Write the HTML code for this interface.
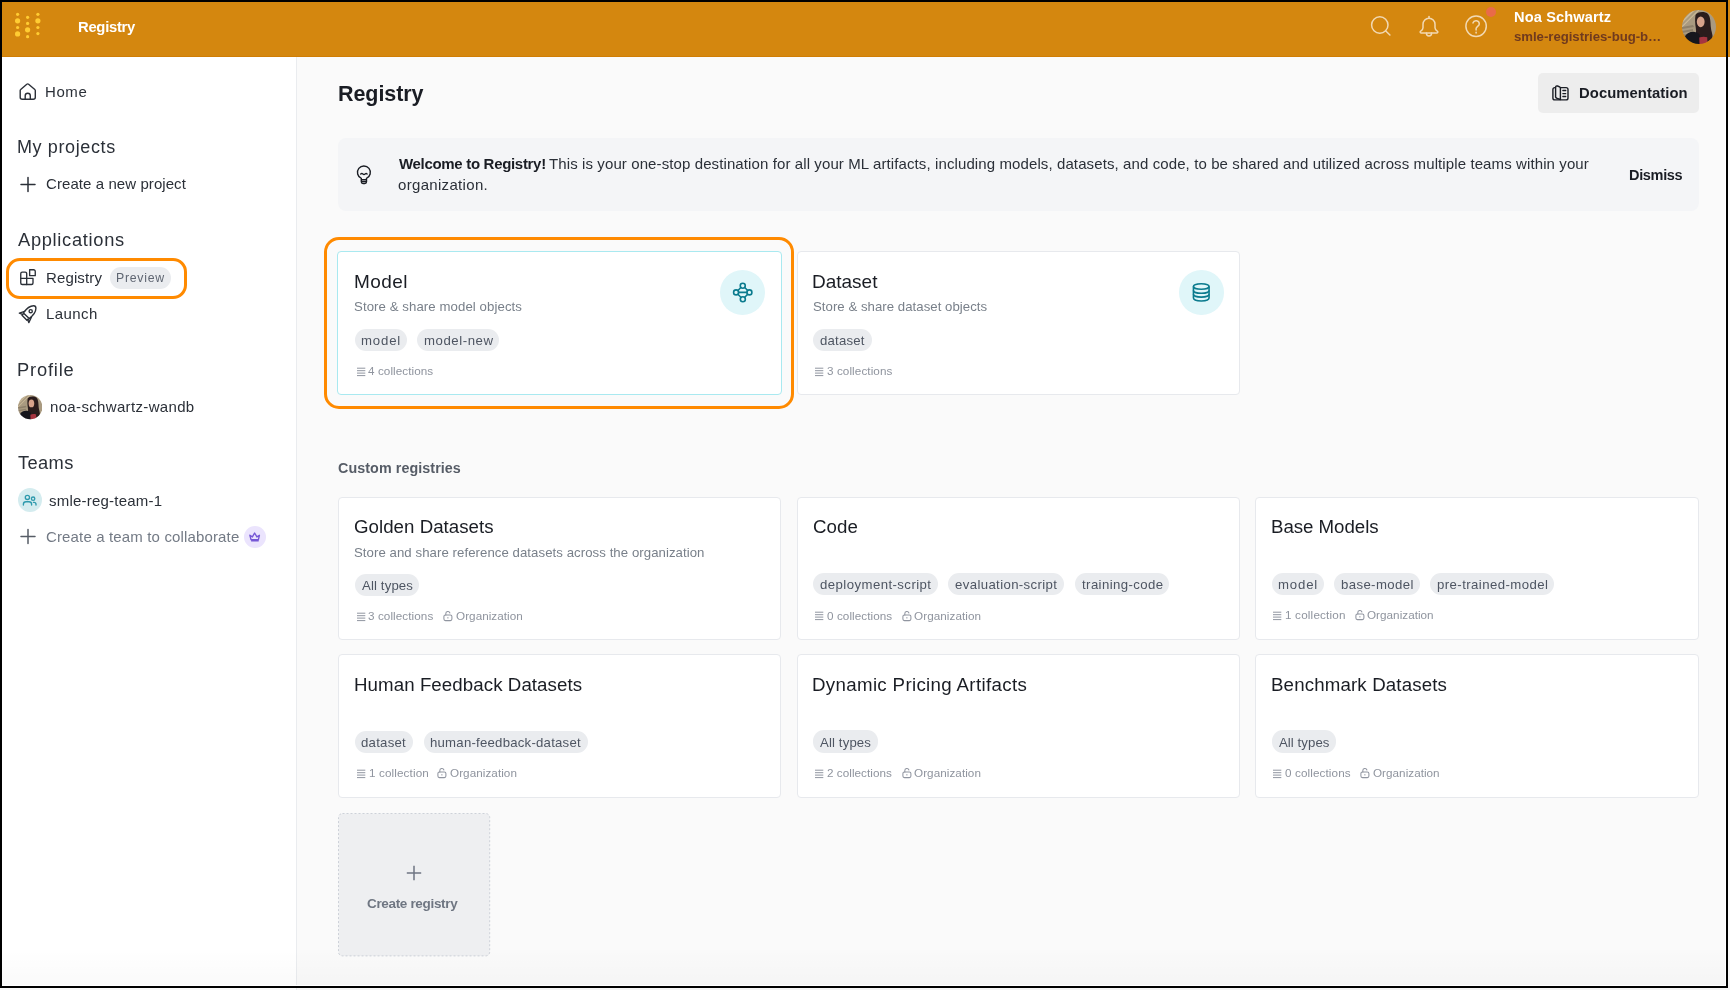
<!DOCTYPE html><html><head><meta charset="utf-8"><style>
html,body{margin:0;padding:0;width:1730px;height:990px;overflow:hidden;background:#FAFAFA;}
body{position:relative;font-family:"Liberation Sans",sans-serif;}
.t{position:absolute;white-space:nowrap;will-change:transform;}
</style></head><body>
<div style="position:absolute;left:0;top:0;width:1730px;height:57px;background:#D4870F;"></div>
<div style="position:absolute;left:0;top:55.6px;width:1730px;height:1.4px;background:#D07D04;"></div>
<svg width="60" height="56" style="position:absolute;left:0;top:0"><circle cx="17.6" cy="14.3" r="1.6" fill="#FFCC33"/><circle cx="17.6" cy="20.8" r="2.6" fill="#FFCC33"/><circle cx="17.6" cy="27.5" r="1.6" fill="#FFCC33"/><circle cx="17.6" cy="33.9" r="2.6" fill="#FFCC33"/><circle cx="27.6" cy="17.3" r="1.6" fill="#FFCC33"/><circle cx="27.6" cy="23.4" r="1.6" fill="#FFCC33"/><circle cx="27.6" cy="29.8" r="2.6" fill="#FFCC33"/><circle cx="27.6" cy="36.7" r="1.6" fill="#FFCC33"/><circle cx="37.9" cy="14.3" r="1.6" fill="#FFCC33"/><circle cx="37.9" cy="20.8" r="2.6" fill="#FFCC33"/><circle cx="37.9" cy="27.5" r="1.6" fill="#FFCC33"/><circle cx="37.9" cy="33.6" r="1.6" fill="#FFCC33"/></svg>
<div class="t" style="left:78.40px;top:20.00px;font-size:14.8px;line-height:14.8px;color:#FFFFFF;font-weight:700;letter-spacing:-0.276px;">Registry</div>
<svg width="200" height="56" style="position:absolute;left:1360px;top:0" fill="none" stroke="#F2D9B3" stroke-width="1.5" stroke-linecap="round" stroke-linejoin="round">
<circle cx="19.8" cy="25" r="8.2"/><path d="M25.8 31l4.1 4"/>
<path d="M69 18.2a6 6 0 0 0-6 6v3.6c0 1.8-1.2 2.8-2.5 3.6a.9.9 0 0 0 .5 1.6h16a.9.9 0 0 0 .5-1.6c-1.3-.8-2.5-1.8-2.5-3.6v-3.6a6 6 0 0 0-6-6z"/><path d="M66.4 33.1a2.6 3 0 0 0 5.2 0"/><path d="M69 16.4v1.8"/>
<circle cx="116.1" cy="26.2" r="10.2"/><path d="M112.9 22.9a3.3 3.3 0 0 1 6.4 1.1c0 2.2-3.2 2.6-3.2 4.6v1.3"/><path d="M116.1 32.3v0.6"/>
</svg>
<div style="position:absolute;left:1485.7px;top:7.3px;width:10px;height:10px;border-radius:50%;background:#E96B49;"></div>
<div class="t" style="left:1514.43px;top:10.00px;font-size:14.6px;line-height:14.6px;color:#FFFFFF;font-weight:700;letter-spacing:0.128px;">Noa Schwartz</div>
<div class="t" style="left:1514.47px;top:30.00px;font-size:13.2px;line-height:13.2px;color:#703A1E;font-weight:700;letter-spacing:-0.034px;">smle-registries-bug-b…</div>
<svg width="34" height="34" style="position:absolute;left:1682px;top:9.5px" viewBox="0 0 34 34">
<defs><clipPath id="ac"><circle cx="17" cy="17" r="17"/></clipPath><filter id="acf"><feGaussianBlur stdDeviation="0.45"/></filter></defs>
<g clip-path="url(#ac)"><g filter="url(#acf)"><rect width="34" height="34" fill="#A99A80"/>
<path d="M-2 8 L8 -2 L10 -2 L-2 10Z M-2 13 L13 -2 L15 -2 L-2 15Z M-2 18 L18 -2 L19.5 -2 L-2 19.5Z M24 -2 L34 8 L34 10 L22 -2Z" fill="#CDBB98"/>
<path d="M0 17 L11 15 L12 17 L0 19Z M0 21 L11 19 L11 21 L0 23Z M0 25 L9 23 L9 25 L0 27Z" fill="#8E806A"/>
<path d="M13.5 5C15 1.5 23 1 26 4c2.5 3 2.5 8 2.8 13 .3 4 2.2 7.5 1.7 11.5L24 33l-10-5c-.5-3 .5-6-.2-10-.7-4-1-9-.3-13z" fill="#2A1D1B"/>
<ellipse cx="18.7" cy="11.8" rx="3.9" ry="5.4" fill="#D7A38B"/>
<path d="M1 34c0-5 2-9 5.5-11 3.5-2 8-1.5 11 1.5L18.5 34z" fill="#12131B"/>
<path d="M17.2 27.5c2.5-1 5.5-1.2 8-.3l.3 6.8H17.5z" fill="#A63440"/>
</g></g></svg>
<div style="position:absolute;left:0;top:57px;width:296px;height:933px;background:#FFFFFF;"></div>
<div style="position:absolute;left:296px;top:57px;width:1px;height:933px;background:#EAECEF;"></div>
<svg width="28" height="28" style="position:absolute;left:14px;top:78px" fill="none" stroke="#2B3038" stroke-width="1.4" stroke-linecap="round" stroke-linejoin="round">
<path d="M6.2 19.3V12.5q0-.6.5-1L12.8 6.2q.9-.7 1.8 0L20.8 11.5q.5.4.5 1V19.3q0 2-2 2H8.2q-2 0-2-2Z"/><path d="M11.2 21.3V17.8a2.55 2.55 0 0 1 5.1 0V21.3"/></svg>
<div class="t" style="left:45.45px;top:84.00px;font-size:15px;line-height:15px;color:#2B3038;letter-spacing:0.593px;">Home</div>
<div class="t" style="left:16.91px;top:138.00px;font-size:18px;line-height:18px;color:#2B3038;letter-spacing:0.612px;">My projects</div>
<svg width="18" height="18" style="position:absolute;left:19px;top:176px" fill="none" stroke="#2B3038" stroke-width="1.5" stroke-linecap="round" stroke-linejoin="round"><path d="M9 1.5v14M2 8.5h14"/></svg>
<div class="t" style="left:45.89px;top:176.00px;font-size:15px;line-height:15px;color:#2B3038;letter-spacing:0.077px;">Create a new project</div>
<div class="t" style="left:17.65px;top:231.00px;font-size:18.3px;line-height:18.3px;color:#2B3038;letter-spacing:0.686px;">Applications</div>
<div style="position:absolute;left:5.5px;top:258.2px;width:175.4px;height:34.6px;border:3.5px solid #FF8A00;border-radius:14px;"></div>
<svg width="28" height="28" style="position:absolute;left:14px;top:264px" fill="none" stroke="#2B3038" stroke-width="1.35" stroke-linecap="round" stroke-linejoin="round">
<path d="M6.75 14.4V9.65a1.5 1.5 0 0 1 1.5-1.5H11.2a1.5 1.5 0 0 1 1.5 1.5V20.45"/><path d="M6.75 14.4H19V18.95a1.5 1.5 0 0 1-1.5 1.5H8.25a1.5 1.5 0 0 1-1.5-1.5Z"/><path d="M15.65 5.75H19.6a1.65 1.65 0 0 1 1.65 1.65V11.65H15.65Z"/></svg>
<div class="t" style="left:45.55px;top:270.00px;font-size:15px;line-height:15px;color:#2B3038;letter-spacing:0.128px;">Registry</div>
<div style="position:absolute;left:109.6px;top:267.2px;width:61.7px;height:21.6px;border-radius:11px;background:#EAECEF;"></div>
<div class="t" style="left:116.28px;top:272.00px;font-size:12.3px;line-height:12.3px;color:#5F6672;letter-spacing:0.734px;">Preview</div>
<svg width="28" height="28" style="position:absolute;left:14px;top:300px" fill="none" stroke="#2B3038" stroke-width="1.4" stroke-linecap="round" stroke-linejoin="round">
<path d="M9.4 12.9C12.5 8.6 16.2 5.8 19.6 5.8 21 5.8 21.9 6.8 21.9 8.3 21.9 11.7 19.2 15.5 15.2 18.6Z"/><path d="M10.6 11.3L5.4 13.2 8.9 14.6"/><path d="M17.5 16.9L14.8 22.6 13.6 19.3"/><path d="M8.9 14.1L8 15.3 12.9 20.2 14.3 19.3"/><circle cx="16.7" cy="11.2" r="1.6"/></svg>
<div class="t" style="left:45.55px;top:306.00px;font-size:15px;line-height:15px;color:#2B3038;letter-spacing:0.406px;">Launch</div>
<div class="t" style="left:16.99px;top:361.00px;font-size:18.3px;line-height:18.3px;color:#2B3038;letter-spacing:0.828px;">Profile</div>
<svg width="24.4" height="24.4" style="position:absolute;left:17.5px;top:395.2px" viewBox="0 0 34 34">
<defs><clipPath id="ac2"><circle cx="17" cy="17" r="17"/></clipPath><filter id="ac2f"><feGaussianBlur stdDeviation="0.45"/></filter></defs>
<g clip-path="url(#ac2)"><g filter="url(#ac2f)"><rect width="34" height="34" fill="#A99A80"/>
<path d="M-2 8 L8 -2 L10 -2 L-2 10Z M-2 13 L13 -2 L15 -2 L-2 15Z M-2 18 L18 -2 L19.5 -2 L-2 19.5Z M24 -2 L34 8 L34 10 L22 -2Z" fill="#CDBB98"/>
<path d="M0 17 L11 15 L12 17 L0 19Z M0 21 L11 19 L11 21 L0 23Z M0 25 L9 23 L9 25 L0 27Z" fill="#8E806A"/>
<path d="M13.5 5C15 1.5 23 1 26 4c2.5 3 2.5 8 2.8 13 .3 4 2.2 7.5 1.7 11.5L24 33l-10-5c-.5-3 .5-6-.2-10-.7-4-1-9-.3-13z" fill="#2A1D1B"/>
<ellipse cx="18.7" cy="11.8" rx="3.9" ry="5.4" fill="#D7A38B"/>
<path d="M1 34c0-5 2-9 5.5-11 3.5-2 8-1.5 11 1.5L18.5 34z" fill="#12131B"/>
<path d="M17.2 27.5c2.5-1 5.5-1.2 8-.3l.3 6.8H17.5z" fill="#A63440"/>
</g></g></svg>
<div class="t" style="left:49.85px;top:399.00px;font-size:15px;line-height:15px;color:#2B3038;letter-spacing:0.341px;">noa-schwartz-wandb</div>
<div class="t" style="left:17.78px;top:454.00px;font-size:18.3px;line-height:18.3px;color:#2B3038;letter-spacing:0.363px;">Teams</div>
<div style="position:absolute;left:17.9px;top:488px;width:24px;height:24px;border-radius:50%;background:#D4ECEF;"></div>
<svg width="32" height="32" style="position:absolute;left:14px;top:484px" fill="none" stroke="#2E9AAD" stroke-width="1.35" stroke-linecap="round" stroke-linejoin="round"><circle cx="13.4" cy="13.4" r="2.1"/><circle cx="19.1" cy="14.7" r="1.7"/><path d="M9.4 21V20.3a2.6 2.6 0 0 1 2.6-2.6H15a2.6 2.6 0 0 1 2.6 2.6V21"/><path d="M19.4 18.3h.6a2 2 0 0 1 2 2V21"/></svg>
<div class="t" style="left:49.38px;top:493.00px;font-size:15px;line-height:15px;color:#2B3038;letter-spacing:0.218px;">smle-reg-team-1</div>
<svg width="18" height="18" style="position:absolute;left:19px;top:528px" fill="none" stroke="#565C66" stroke-width="1.5" stroke-linecap="round"><path d="M9 1.5v14M2 8.5h14"/></svg>
<div class="t" style="left:45.59px;top:529.00px;font-size:15px;line-height:15px;color:#737A85;letter-spacing:0.148px;">Create a team to collaborate</div>
<div style="position:absolute;left:244px;top:526.2px;width:22px;height:22px;border-radius:50%;background:#EBE4FD;"></div>
<svg width="32" height="32" style="position:absolute;left:238px;top:521px"><path d="M11.9 14.3L14.4 15.9 16.6 12 18.9 15.9 21.4 14.3 20.4 18.6H13Z" fill="none" stroke="#7657D6" stroke-width="1.4" stroke-linejoin="round"/><rect x="13.1" y="18.2" width="7.6" height="2.3" fill="#7657D6"/></svg>
<div style="position:absolute;left:297px;top:57px;width:1433px;height:933px;background:#FAFAFA;"></div>
<div class="t" style="left:337.95px;top:84.00px;font-size:21.5px;line-height:21.5px;color:#1A1D24;font-weight:700;letter-spacing:-0.071px;">Registry</div>
<div style="position:absolute;left:1538.3px;top:73.1px;width:160.5px;height:40.3px;border-radius:5px;background:#EDEDED;"></div>
<svg width="28" height="28" style="position:absolute;left:1546px;top:79px" fill="none" stroke="#1A1D24" stroke-width="1.4" stroke-linejoin="round" stroke-linecap="round">
<path d="M9.5 8.6H8.9a2 2 0 0 0-2 2V18.9a2 2 0 0 0 2 2H20a2 2 0 0 0 2-2V10.6a2 2 0 0 0-2-2H14.4"/><path d="M9.6 18V8.3a1.4 1.4 0 0 1 1.9-1.3L13.6 7.9a1.4 1.4 0 0 1 .8 1.3V20.5L11.1 19.4a2.2 2.2 0 0 1-1.5-1.4Z"/><path d="M16.9 11.5h2.8M16.9 14.6h2.8M16.9 17.5h2.8"/></svg>
<div class="t" style="left:1578.50px;top:86.00px;font-size:14.8px;line-height:14.8px;color:#1A1D24;font-weight:700;letter-spacing:0.079px;">Documentation</div>
<div style="position:absolute;left:337.7px;top:138px;width:1361px;height:72.5px;border-radius:8px;background:#F4F5F7;"></div>
<svg width="28" height="28" style="position:absolute;left:350px;top:160px" fill="none" stroke="#1A1D24" stroke-width="1.4" stroke-linecap="round" stroke-linejoin="round">
<path d="M11.3 18.3A6.45 6.45 0 1 1 16.5 18.3V21.8a1.7 1.7 0 0 1-1.7 1.7h-1.8a1.7 1.7 0 0 1-1.7-1.7Z"/><path d="M11.6 19.8h4.6M11.8 21.6h4.2"/><path d="M10.7 14q1.1-.9 2.2 0t2.2 0 2 0"/></svg>
<div class="t" style="left:398.83px;top:156.00px;font-size:15px;line-height:15px;color:#1A1D24;font-weight:700;letter-spacing:-0.314px;">Welcome to Registry!</div>
<div class="t" style="left:548.54px;top:156.00px;font-size:15px;line-height:15px;color:#2B3038;letter-spacing:0.105px;">This is your one-stop destination for all your ML artifacts, including models, datasets, and code, to be shared and utilized across multiple teams within your</div>
<div class="t" style="left:398.31px;top:177.00px;font-size:15px;line-height:15px;color:#2B3038;letter-spacing:0.321px;">organization.</div>
<div class="t" style="left:1629.33px;top:168.00px;font-size:14.5px;line-height:14.5px;color:#1A1D24;font-weight:700;letter-spacing:-0.324px;">Dismiss</div>
<div style="position:absolute;left:323.5px;top:237px;width:470.5px;height:172px;box-sizing:border-box;border:3.4px solid #FF8A00;border-radius:15px;"></div>
<div style="position:absolute;left:337.1px;top:251.0px;width:444.5px;height:143.6px;box-sizing:border-box;border:1px solid #A9E9F0;border-radius:4px;background:#FFFFFF;"></div>
<div style="position:absolute;left:796.6px;top:251.0px;width:443.6px;height:143.6px;box-sizing:border-box;border:1px solid #E7E9ED;border-radius:4px;background:#FFFFFF;"></div>
<div class="t" style="left:354.03px;top:272.00px;font-size:19px;line-height:19px;color:#1A1D24;letter-spacing:0.431px;">Model</div>
<div class="t" style="left:354.30px;top:300.00px;font-size:13.2px;line-height:13.2px;color:#79808A;letter-spacing:0.087px;">Store &amp; share model objects</div>
<div style="position:absolute;left:354.8px;top:329.1px;width:52.3px;height:21.6px;border-radius:11px;background:#EAECEF;"></div>
<div class="t" style="left:361.19px;top:334.00px;font-size:13.2px;line-height:13.2px;color:#4E5562;letter-spacing:0.842px;">model</div>
<div style="position:absolute;left:417.3px;top:329.1px;width:82.0px;height:21.6px;border-radius:11px;background:#EAECEF;"></div>
<div class="t" style="left:423.59px;top:334.00px;font-size:13.2px;line-height:13.2px;color:#4E5562;letter-spacing:0.562px;">model-new</div>
<svg width="10" height="10" style="position:absolute;left:356.6px;top:366.6px" stroke="#9095A0" stroke-width="1"><path d="M0 1.2h8.3M0 3.7h8.3M0 6.1h8.3M0 8.6h8.3"/></svg>
<div class="t" style="left:368.39px;top:365.00px;font-size:11.7px;line-height:11.7px;color:#8F949E;letter-spacing:0.073px;">4 collections</div>
<div style="position:absolute;left:720.4px;top:269.8px;width:44.8px;height:44.8px;border-radius:50%;background:#E0F6F9;"></div>
<svg width="30" height="30" style="position:absolute;left:728px;top:278px" fill="none" stroke="#0B7B8E" stroke-width="1.6" stroke-linecap="round"><circle cx="14.75" cy="7.7" r="2.5"/><circle cx="14.85" cy="21.2" r="2.5"/><circle cx="8.1" cy="14.4" r="2.5"/><circle cx="21.4" cy="14.4" r="2.5"/><path d="M10.6 14.4h8.3M12.9 9.5L9.9 12.5M16.7 9.5l3 3M9.9 16.3l3 3M19.7 16.3l-3 3"/></svg>
<div class="t" style="left:812.23px;top:272.00px;font-size:19px;line-height:19px;color:#1A1D24;letter-spacing:-0.007px;">Dataset</div>
<div class="t" style="left:812.90px;top:300.00px;font-size:13.2px;line-height:13.2px;color:#79808A;letter-spacing:0.039px;">Store &amp; share dataset objects</div>
<div style="position:absolute;left:812.9px;top:329.0px;width:58.7px;height:21.9px;border-radius:11px;background:#EAECEF;"></div>
<div class="t" style="left:820.12px;top:334.00px;font-size:13.2px;line-height:13.2px;color:#4E5562;letter-spacing:0.190px;">dataset</div>
<svg width="10" height="10" style="position:absolute;left:815.1px;top:366.6px" stroke="#9095A0" stroke-width="1"><path d="M0 1.2h8.3M0 3.7h8.3M0 6.1h8.3M0 8.6h8.3"/></svg>
<div class="t" style="left:826.63px;top:365.00px;font-size:11.7px;line-height:11.7px;color:#8F949E;letter-spacing:0.087px;">3 collections</div>
<div style="position:absolute;left:1179px;top:270px;width:44.5px;height:44.5px;border-radius:50%;background:#E0F6F9;"></div>
<svg width="30" height="30" style="position:absolute;left:1186px;top:278px" fill="none" stroke="#0B7B8E" stroke-width="1.6"><ellipse cx="15.25" cy="8.5" rx="7.8" ry="2.75"/><path d="M7.45 8.5V20.1c0 1.6 3.5 2.9 7.8 2.9s7.8-1.3 7.8-2.9V8.5"/><path d="M7.45 12.4c0 1.6 3.5 2.9 7.8 2.9s7.8-1.3 7.8-2.9M7.45 16.25c0 1.6 3.5 2.9 7.8 2.9s7.8-1.3 7.8-2.9"/></svg>
<div class="t" style="left:337.64px;top:461.00px;font-size:14.3px;line-height:14.3px;color:#565C66;font-weight:700;letter-spacing:0.079px;">Custom registries</div>
<div style="position:absolute;left:337.6px;top:496.6px;width:443.8px;height:143.3px;box-sizing:border-box;border:1px solid #E7E9ED;border-radius:4px;background:#FFFFFF;"></div>
<div style="position:absolute;left:337.6px;top:654.3px;width:443.8px;height:143.3px;box-sizing:border-box;border:1px solid #E7E9ED;border-radius:4px;background:#FFFFFF;"></div>
<div style="position:absolute;left:796.6px;top:496.6px;width:443.8px;height:143.3px;box-sizing:border-box;border:1px solid #E7E9ED;border-radius:4px;background:#FFFFFF;"></div>
<div style="position:absolute;left:796.6px;top:654.3px;width:443.8px;height:143.3px;box-sizing:border-box;border:1px solid #E7E9ED;border-radius:4px;background:#FFFFFF;"></div>
<div style="position:absolute;left:1255.0px;top:496.6px;width:443.8px;height:143.3px;box-sizing:border-box;border:1px solid #E7E9ED;border-radius:4px;background:#FFFFFF;"></div>
<div style="position:absolute;left:1255.0px;top:654.3px;width:443.8px;height:143.3px;box-sizing:border-box;border:1px solid #E7E9ED;border-radius:4px;background:#FFFFFF;"></div>
<div class="t" style="left:354.24px;top:518.00px;font-size:18.7px;line-height:18.7px;color:#1A1D24;letter-spacing:0.029px;">Golden Datasets</div>
<div class="t" style="left:353.80px;top:546.00px;font-size:13.2px;line-height:13.2px;color:#79808A;letter-spacing:0.065px;">Store and share reference datasets across the organization</div>
<div style="position:absolute;left:354.6px;top:574.2px;width:64.5px;height:21.6px;border-radius:11px;background:#EAECEF;"></div>
<div class="t" style="left:361.74px;top:579.00px;font-size:13.2px;line-height:13.2px;color:#4E5562;letter-spacing:0.135px;">All types</div>
<svg width="10" height="10" style="position:absolute;left:356.5px;top:611.5px" stroke="#9095A0" stroke-width="1"><path d="M0 1.2h8.3M0 3.7h8.3M0 6.1h8.3M0 8.6h8.3"/></svg>
<div class="t" style="left:368.23px;top:610.00px;font-size:11.7px;line-height:11.7px;color:#8F949E;letter-spacing:0.079px;">3 collections</div>
<svg width="12" height="12" style="position:absolute;left:443.2px;top:610.2px" fill="none" stroke="#9095A0" stroke-width="1.05" stroke-linejoin="round" stroke-linecap="round"><rect x="0.9" y="5" width="8" height="5.6" rx="1.5"/><path d="M2.8 5V3.7a2.1 2.1 0 0 1 4.1-.7"/><path d="M4.9 7.4v.5"/></svg>
<div class="t" style="left:455.50px;top:610.00px;font-size:11.7px;line-height:11.7px;color:#8F949E;letter-spacing:0.048px;">Organization</div>
<div class="t" style="left:812.62px;top:518.00px;font-size:18.7px;line-height:18.7px;color:#1A1D24;letter-spacing:0.082px;">Code</div>
<div style="position:absolute;left:813.1px;top:572.9px;width:124.5px;height:21.7px;border-radius:11px;background:#EAECEF;"></div>
<div class="t" style="left:819.82px;top:578.00px;font-size:13.2px;line-height:13.2px;color:#4E5562;letter-spacing:0.434px;">deployment-script</div>
<div style="position:absolute;left:948.2px;top:572.9px;width:115.7px;height:21.7px;border-radius:11px;background:#EAECEF;"></div>
<div class="t" style="left:955.20px;top:578.00px;font-size:13.2px;line-height:13.2px;color:#4E5562;letter-spacing:0.372px;">evaluation-script</div>
<div style="position:absolute;left:1074.5px;top:572.9px;width:94.8px;height:21.7px;border-radius:11px;background:#EAECEF;"></div>
<div class="t" style="left:1081.68px;top:578.00px;font-size:13.2px;line-height:13.2px;color:#4E5562;letter-spacing:0.410px;">training-code</div>
<svg width="10" height="10" style="position:absolute;left:815.3px;top:610.9px" stroke="#9095A0" stroke-width="1"><path d="M0 1.2h8.3M0 3.7h8.3M0 6.1h8.3M0 8.6h8.3"/></svg>
<div class="t" style="left:826.69px;top:610.00px;font-size:11.7px;line-height:11.7px;color:#8F949E;letter-spacing:0.074px;">0 collections</div>
<svg width="12" height="12" style="position:absolute;left:901.7px;top:609.6px" fill="none" stroke="#9095A0" stroke-width="1.05" stroke-linejoin="round" stroke-linecap="round"><rect x="0.9" y="5" width="8" height="5.6" rx="1.5"/><path d="M2.8 5V3.7a2.1 2.1 0 0 1 4.1-.7"/><path d="M4.9 7.4v.5"/></svg>
<div class="t" style="left:913.90px;top:610.00px;font-size:11.7px;line-height:11.7px;color:#8F949E;letter-spacing:0.075px;">Organization</div>
<div class="t" style="left:1270.66px;top:518.00px;font-size:18.7px;line-height:18.7px;color:#1A1D24;letter-spacing:-0.042px;">Base Models</div>
<div style="position:absolute;left:1271.6px;top:572.7px;width:52.2px;height:22.2px;border-radius:11px;background:#EAECEF;"></div>
<div class="t" style="left:1278.09px;top:578.00px;font-size:13.2px;line-height:13.2px;color:#4E5562;letter-spacing:0.842px;">model</div>
<div style="position:absolute;left:1334.4px;top:572.7px;width:85.4px;height:22.2px;border-radius:11px;background:#EAECEF;"></div>
<div class="t" style="left:1340.92px;top:578.00px;font-size:13.2px;line-height:13.2px;color:#4E5562;letter-spacing:0.382px;">base-model</div>
<div style="position:absolute;left:1430.4px;top:572.7px;width:124.0px;height:22.2px;border-radius:11px;background:#EAECEF;"></div>
<div class="t" style="left:1436.92px;top:578.00px;font-size:13.2px;line-height:13.2px;color:#4E5562;letter-spacing:0.424px;">pre-trained-model</div>
<svg width="10" height="10" style="position:absolute;left:1273.3px;top:610.6px" stroke="#9095A0" stroke-width="1"><path d="M0 1.2h8.3M0 3.7h8.3M0 6.1h8.3M0 8.6h8.3"/></svg>
<div class="t" style="left:1285.18px;top:609.00px;font-size:11.7px;line-height:11.7px;color:#8F949E;letter-spacing:0.182px;">1 collection</div>
<svg width="12" height="12" style="position:absolute;left:1354.9px;top:609.3px" fill="none" stroke="#9095A0" stroke-width="1.05" stroke-linejoin="round" stroke-linecap="round"><rect x="0.9" y="5" width="8" height="5.6" rx="1.5"/><path d="M2.8 5V3.7a2.1 2.1 0 0 1 4.1-.7"/><path d="M4.9 7.4v.5"/></svg>
<div class="t" style="left:1367.30px;top:609.00px;font-size:11.7px;line-height:11.7px;color:#8F949E;letter-spacing:0.030px;">Organization</div>
<div class="t" style="left:353.76px;top:676.00px;font-size:18.7px;line-height:18.7px;color:#1A1D24;letter-spacing:0.075px;">Human Feedback Datasets</div>
<div style="position:absolute;left:354.8px;top:731.1px;width:58.4px;height:21.6px;border-radius:11px;background:#EAECEF;"></div>
<div class="t" style="left:361.42px;top:736.00px;font-size:13.2px;line-height:13.2px;color:#4E5562;letter-spacing:0.240px;">dataset</div>
<div style="position:absolute;left:423.7px;top:731.1px;width:164.7px;height:21.6px;border-radius:11px;background:#EAECEF;"></div>
<div class="t" style="left:430.48px;top:736.00px;font-size:13.2px;line-height:13.2px;color:#4E5562;letter-spacing:0.227px;">human-feedback-dataset</div>
<svg width="10" height="10" style="position:absolute;left:356.5px;top:768.7px" stroke="#9095A0" stroke-width="1"><path d="M0 1.2h8.3M0 3.7h8.3M0 6.1h8.3M0 8.6h8.3"/></svg>
<div class="t" style="left:368.58px;top:767.00px;font-size:11.7px;line-height:11.7px;color:#8F949E;letter-spacing:0.118px;">1 collection</div>
<svg width="12" height="12" style="position:absolute;left:437.3px;top:767.4px" fill="none" stroke="#9095A0" stroke-width="1.05" stroke-linejoin="round" stroke-linecap="round"><rect x="0.9" y="5" width="8" height="5.6" rx="1.5"/><path d="M2.8 5V3.7a2.1 2.1 0 0 1 4.1-.7"/><path d="M4.9 7.4v.5"/></svg>
<div class="t" style="left:450.10px;top:767.00px;font-size:11.7px;line-height:11.7px;color:#8F949E;letter-spacing:0.057px;">Organization</div>
<div class="t" style="left:812.36px;top:676.00px;font-size:18.7px;line-height:18.7px;color:#1A1D24;letter-spacing:0.338px;">Dynamic Pricing Artifacts</div>
<div style="position:absolute;left:812.8px;top:730.4px;width:65.2px;height:22.9px;border-radius:11px;background:#EAECEF;"></div>
<div class="t" style="left:820.04px;top:736.00px;font-size:13.2px;line-height:13.2px;color:#4E5562;letter-spacing:0.135px;">All types</div>
<svg width="10" height="10" style="position:absolute;left:815.3px;top:768.7px" stroke="#9095A0" stroke-width="1"><path d="M0 1.2h8.3M0 3.7h8.3M0 6.1h8.3M0 8.6h8.3"/></svg>
<div class="t" style="left:827.08px;top:767.00px;font-size:11.7px;line-height:11.7px;color:#8F949E;letter-spacing:0.041px;">2 collections</div>
<svg width="12" height="12" style="position:absolute;left:901.7px;top:767.4px" fill="none" stroke="#9095A0" stroke-width="1.05" stroke-linejoin="round" stroke-linecap="round"><rect x="0.9" y="5" width="8" height="5.6" rx="1.5"/><path d="M2.8 5V3.7a2.1 2.1 0 0 1 4.1-.7"/><path d="M4.9 7.4v.5"/></svg>
<div class="t" style="left:914.20px;top:767.00px;font-size:11.7px;line-height:11.7px;color:#8F949E;letter-spacing:0.057px;">Organization</div>
<div class="t" style="left:1271.36px;top:676.00px;font-size:18.7px;line-height:18.7px;color:#1A1D24;letter-spacing:0.144px;">Benchmark Datasets</div>
<div style="position:absolute;left:1271.5px;top:730.4px;width:64.7px;height:22.9px;border-radius:11px;background:#EAECEF;"></div>
<div class="t" style="left:1278.74px;top:736.00px;font-size:13.2px;line-height:13.2px;color:#4E5562;letter-spacing:0.073px;">All types</div>
<svg width="10" height="10" style="position:absolute;left:1273.3px;top:768.7px" stroke="#9095A0" stroke-width="1"><path d="M0 1.2h8.3M0 3.7h8.3M0 6.1h8.3M0 8.6h8.3"/></svg>
<div class="t" style="left:1285.19px;top:767.00px;font-size:11.7px;line-height:11.7px;color:#8F949E;letter-spacing:0.107px;">0 collections</div>
<svg width="12" height="12" style="position:absolute;left:1360.3px;top:767.4px" fill="none" stroke="#9095A0" stroke-width="1.05" stroke-linejoin="round" stroke-linecap="round"><rect x="0.9" y="5" width="8" height="5.6" rx="1.5"/><path d="M2.8 5V3.7a2.1 2.1 0 0 1 4.1-.7"/><path d="M4.9 7.4v.5"/></svg>
<div class="t" style="left:1372.60px;top:767.00px;font-size:11.7px;line-height:11.7px;color:#8F949E;letter-spacing:0.030px;">Organization</div>
<svg width="153" height="144" style="position:absolute;left:337.8px;top:812.5px"><rect x="0.5" y="0.5" width="151.2" height="142.4" rx="4" fill="#EEEFF1" stroke="#CDD1D8" stroke-width="1" stroke-dasharray="2 2"/></svg>
<svg width="18" height="18" style="position:absolute;left:404.8px;top:863.6px" stroke="#6F7682" stroke-width="1.5"><path d="M9 1.8v14.4M1.8 9h14.4"/></svg>
<div class="t" style="left:367.00px;top:897.00px;font-size:13.5px;line-height:13.5px;color:#6F7682;font-weight:700;letter-spacing:-0.332px;">Create registry</div>
<div style="position:absolute;left:0;top:950px;width:1730px;height:40px;background:linear-gradient(to bottom,rgba(0,0,0,0),rgba(0,0,0,0.025));"></div>
<div style="position:absolute;left:0;top:0;width:1728px;height:988px;box-sizing:border-box;border:2px solid #000;"></div>
<div style="position:absolute;left:2px;top:985px;width:1724px;height:1px;background:#fff;"></div>
<div style="position:absolute;left:1725px;top:57px;width:1px;height:929px;background:#fff;"></div>
</body></html>
